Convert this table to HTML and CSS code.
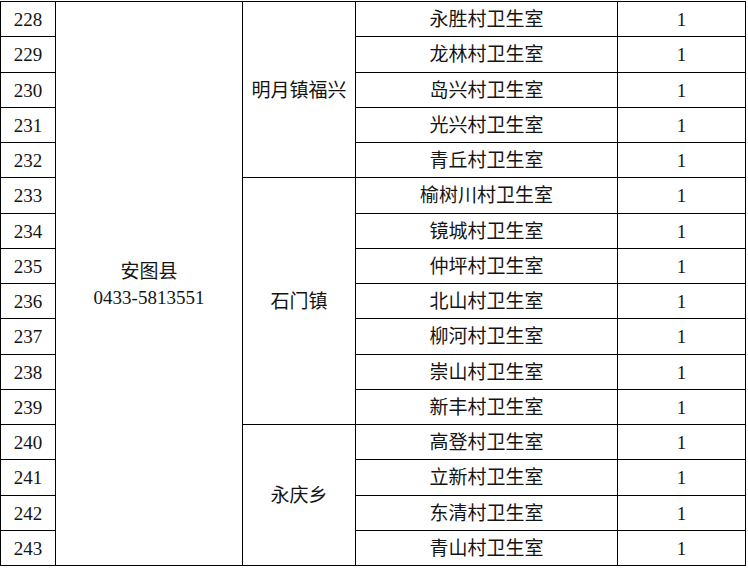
FILE: index.html
```html
<!DOCTYPE html>
<html lang="zh-CN">
<head>
<meta charset="utf-8">
<title>安图县</title>
<link rel="stylesheet" href="styles.css">
</head>
<body>
<table class="grid">
  <colgroup>
    <col class="c-no"><col class="c-county"><col class="c-town"><col class="c-clinic"><col class="c-count">
  </colgroup>
  <tbody>
    <tr><td>228</td><td rowspan="16" class="county">安图县<br>0433-5813551</td><td rowspan="5">明月镇福兴</td><td>永胜村卫生室</td><td>1</td></tr>
    <tr><td>229</td><td>龙林村卫生室</td><td>1</td></tr>
    <tr><td>230</td><td>岛兴村卫生室</td><td>1</td></tr>
    <tr><td>231</td><td>光兴村卫生室</td><td>1</td></tr>
    <tr><td>232</td><td>青丘村卫生室</td><td>1</td></tr>
    <tr><td>233</td><td rowspan="7">石门镇</td><td>榆树川村卫生室</td><td>1</td></tr>
    <tr><td>234</td><td>镜城村卫生室</td><td>1</td></tr>
    <tr><td>235</td><td>仲坪村卫生室</td><td>1</td></tr>
    <tr><td>236</td><td>北山村卫生室</td><td>1</td></tr>
    <tr><td>237</td><td>柳河村卫生室</td><td>1</td></tr>
    <tr><td>238</td><td>崇山村卫生室</td><td>1</td></tr>
    <tr><td>239</td><td>新丰村卫生室</td><td>1</td></tr>
    <tr><td>240</td><td rowspan="4">永庆乡</td><td>高登村卫生室</td><td>1</td></tr>
    <tr><td>241</td><td>立新村卫生室</td><td>1</td></tr>
    <tr><td>242</td><td>东清村卫生室</td><td>1</td></tr>
    <tr><td>243</td><td>青山村卫生室</td><td>1</td></tr>
  </tbody>
</table>
</body>
</html>
```
FILE: styles.css
```css
html, body {
  margin: 0;
  padding: 0;
  background: #ffffff;
}
body {
  padding-top: 1px;
}
.grid {
  border-collapse: collapse;
  table-layout: fixed;
  width: 745px;
  font-family: "Liberation Serif", "Noto Sans CJK SC", serif;
  font-size: 19px;
  color: #141414;
}
.c-no { width: 55px; }
.c-county { width: 187px; }
.c-town { width: 113px; }
.c-clinic { width: 262px; }
.c-count { width: 128px; }
.grid tr {
  height: 35.25px;
}
.grid td {
  border: 1px solid #000000;
  padding: 2px 0 0 0;
  text-align: center;
  vertical-align: middle;
  line-height: 22px;
  white-space: nowrap;
}
.grid td.county {
  line-height: 26px;
}
```
